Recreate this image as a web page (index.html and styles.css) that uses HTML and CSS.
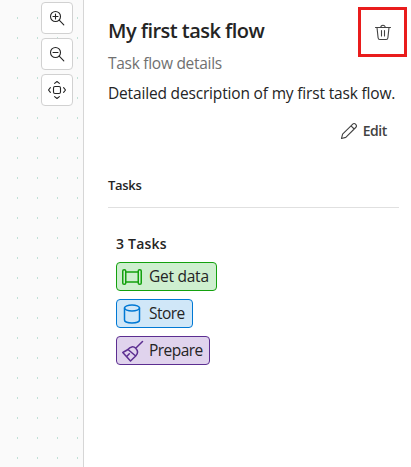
FILE: index.html
```
<!DOCTYPE html>
<html lang="en">
<head>
<meta charset="utf-8">
<title>Task flow details</title>
<link rel="stylesheet" href="styles.css">
</head>
<body>
<main class="app">
  <section class="canvas">
    <button class="tool" aria-label="Zoom in"><svg width="30" height="30" viewBox="0 0 30 30"><circle cx="13.5" cy="13.5" r="5"/><path d="M17.2 17.2l4.6 4.6M11 13.5h5M13.5 11v5"/></svg></button>
    <button class="tool" aria-label="Zoom out"><svg width="30" height="30" viewBox="0 0 30 30"><circle cx="13.5" cy="13.5" r="5"/><path d="M17.2 17.2l4.6 4.6M11 13.5h5"/></svg></button>
    <button class="tool" aria-label="Fit to screen"><svg width="30" height="30" viewBox="0 0 30 30"><rect x="11.5" y="11.5" width="7" height="7" rx="1.5"/><path d="M12.6 8.400L15 6.500l2.400 1.900M12.600 21.600L15 23.500l2.400-1.900M8.400 12.600L6.500 15l1.900 2.400M21.600 12.600L23.500 15l-1.900 2.400"/></svg></button>
  </section>
  <section class="panel">
    <header class="head">
      <h1 class="title">My first task flow</h1>
      <button class="delete" aria-label="Delete"><svg width="18" height="18" viewBox="0 0 18 18"><path d="M1.500 4.500h15M6.800 4.500a2.200 2.200 0 0 1 4.400 0M3 4.500l1.100 10.300a1.800 1.800 0 0 0 1.800 1.700h6.200a1.800 1.800 0 0 0 1.800-1.700L15 4.500M7.500 7.500v5.500M10.500 7.500v5.500"/></svg></button>
    </header>
    <p class="subtitle">Task flow details</p>
    <p class="description">Detailed description of my first task flow.</p>
    <button class="edit"><svg width="18" height="18" viewBox="0 0 18 18"><path d="M1.500 16.500l1.100-4.300L12.500 2.300a2.200 2.200 0 0 1 3.200 3.200L5.800 15.400zM11 3.800l3.200 3.200"/></svg><span>Edit</span></button>
    <h2 class="section">Tasks</h2>
    <div class="tasks">
      <h3 class="count">3 Tasks</h3>
      <div class="tag get"><svg width="20" height="18" viewBox="0 0 20 18"><rect x=".75" y="1.750" width="3" height="14.500" rx="1.300"/><rect x="16.250" y="1.750" width="3" height="14.500" rx="1.300"/><path d="M3.750 4h12.500M3.750 14h12.500"/></svg><span>Get data</span></div>
      <div class="tag store"><svg width="20" height="20" viewBox="0 0 20 20"><ellipse cx="10" cy="4" rx="7.500" ry="3"/><path d="M2.500 4v12c0 1.700 3.400 3 7.500 3s7.500-1.300 7.500-3V4"/></svg><span>Store</span></div>
      <div class="tag prepare"><svg width="22" height="22" viewBox="0 0 22 22"><path d="M20.500 1.500l-6.300 6.300M6 9.500c2-3 5.500-3.500 7.700-1.300s2.300 5.300 0 7.800L8.500 21 .8 12.500zM6 9.500l7.700 6.500M4.700 16.500l2.600-2.700"/></svg><span>Prepare</span></div>
    </div>
  </section>
</main>
</body>
</html>
```
FILE: styles.css
```
* { box-sizing: border-box; }
body { margin: 0; background: #fff; color: #242424; font-family: "Open Sans", "Noto Sans", sans-serif; }
h1, h2, h3, p { margin: 0; white-space: nowrap; }
button { padding: 0; font: inherit; color: inherit; background: #fff; border: 0; }
svg { display: block; flex: none; fill: none; stroke: currentColor; stroke-width: 1.1; stroke-linecap: round; stroke-linejoin: round; }
.app { display: flex; height: 467px; overflow: hidden; }
.canvas {
  width: 84px; padding: 2px 10px 0 0; border-right: 1px solid #d6d6d6;
  display: flex; flex-direction: column; align-items: flex-end; gap: 4px;
  background: conic-gradient(from 0deg at 1px 2px, #fafafa 75%, #c0e0d6 0) 17px 17px / 20px 20px;
}
.tool { width: 32px; height: 32px; border: 1px solid #d1d1d1; border-radius: 4px; }
.panel { flex: 1; padding: 7px 4px 0 24px; display: flex; flex-direction: column; }
.head { display: flex; justify-content: space-between; height: 50px; }
.title { font-size: 20px; line-height: 28px; font-weight: 600; padding-top: 10px; letter-spacing: -.53px; }
.delete { width: 49px; height: 50px; border: 3px solid #e91c1c; display: flex; align-items: center; justify-content: center; color: #424242; }
.subtitle { font-size: 15.5px; line-height: 20px; margin-top: -4px; color: #707070; letter-spacing: -.28px; }
.description { font-size: 15.5px; line-height: 20px; margin-top: 10px; letter-spacing: -.17px; }
.edit { display: flex; align-items: center; align-self: flex-end; gap: 5px; height: 24px; margin: 15px 20px 1px 0; font-size: 14px; font-weight: 600; color: #424242; letter-spacing: -.4px; }
.edit svg { margin-top: 2px; }
.section { height: 33px; margin: 32px 8px 0 0; border-bottom: 1px solid #e0e0e0; font-size: 13px; line-height: 20px; font-weight: 600; letter-spacing: -.3px; }
.tasks { padding: 26px 0 0 8px; display: flex; flex-direction: column; align-items: flex-start; gap: 8px; }
.count { font-size: 14px; line-height: 20px; font-weight: 600; letter-spacing: .2px; }
.tag { height: 29px; padding-left: 5px; border: 1px solid; border-radius: 4px; display: flex; align-items: center; gap: 7px; font-size: 15.5px; line-height: 20px; letter-spacing: -.55px; }
.tag span { color: #242424; padding-bottom: 2px; }
.tag svg { stroke-width: 1.5; }
.get { width: 101px; color: #13a10e; background: #ceefcf; letter-spacing: -.25px; }
.store { width: 77px; color: #0078d4; background: #d0e7f8; }
.prepare { width: 94px; color: #5c2e91; background: #e0d3ed; }
.prepare svg { margin-right: -2px; }
```
